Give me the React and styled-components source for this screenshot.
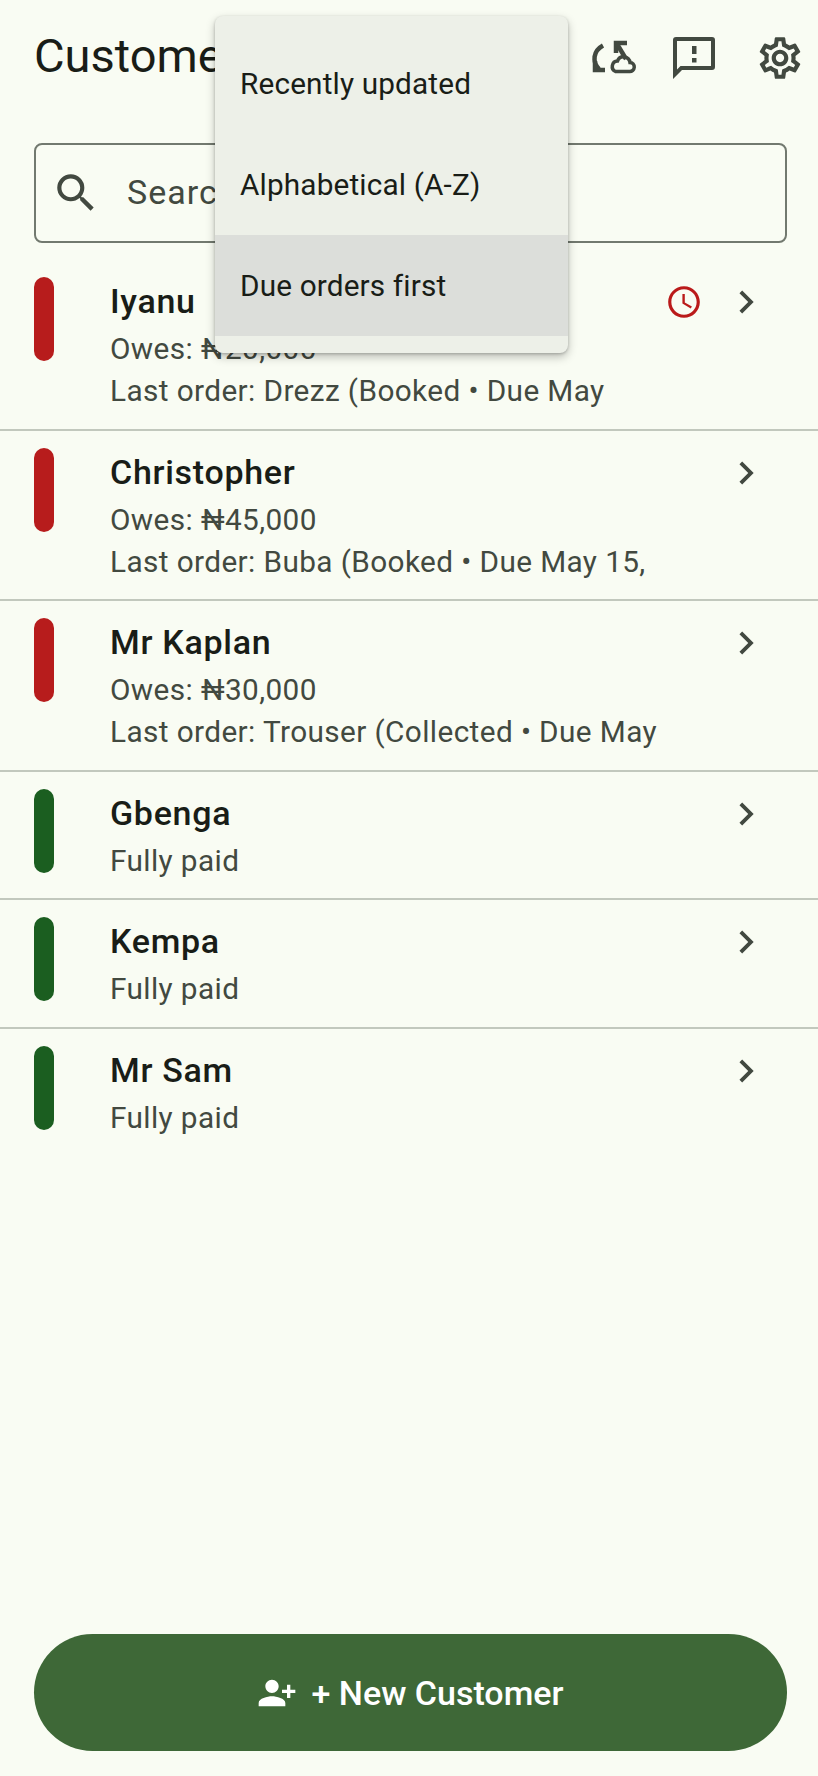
import React from 'react';
import styled, { createGlobalStyle } from 'styled-components';
import {
  MdOutlineSettings,
  MdSearch,
  MdAccessTime,
  MdChevronRight,
  MdPersonAddAlt1,
} from 'react-icons/md';

const customers = [
  { name: 'Iyanu', owes: '₦20,000', last: 'Last order: Drezz (Booked • Due May', late: true },
  { name: 'Christopher', owes: '₦45,000', last: 'Last order: Buba (Booked • Due May 15,' },
  { name: 'Mr Kaplan', owes: '₦30,000', last: 'Last order: Trouser (Collected • Due May' },
  { name: 'Gbenga' },
  { name: 'Kempa' },
  { name: 'Mr Sam' },
];

const sortOptions = ['Recently updated', 'Alphabetical (A-Z)', 'Due orders first'];

function CloudArrowsIcon() {
  return (
    <svg width="60" height="55" viewBox="0 0 60 55" fill="none" stroke="currentColor" strokeWidth="4.5">
      <path d="M20 15.5C10 21 9 32 16 39" />
      <path d="M12 31V40H22" />
      <path d="M33 23V13H44" />
      <path d="M34 14L43 29" />
      <path
        d="M32.5 41.5H46.5a4.5 4.5 0 0 0 .5-9a6.5 6.5 0 0 0-12.5-1.5a5.5 5.5 0 0 0-2 10.5Z"
        strokeWidth="3.5"
      />
    </svg>
  );
}

function FeedbackIcon() {
  return (
    <svg width="60" height="55" viewBox="0 0 60 55" fill="currentColor">
      <path
        fillRule="evenodd"
        d="M12 7H48a3 3 0 0 1 3 3V37a3 3 0 0 1-3 3H18L9 49V10a3 3 0 0 1 3-3ZM13 11V39.5L16.5 36H47V11Z"
      />
      <rect x="28" y="16" width="4.5" height="8" />
      <rect x="28" y="28" width="4.5" height="4.5" />
    </svg>
  );
}

export default function App() {
  return (
    <Page>
      <GlobalStyle />
      <Header>
        <Title>Customers</Title>
        <HeaderIcons>
          <CloudArrowsIcon />
          <FeedbackIcon />
          <GearIcon size={50} />
        </HeaderIcons>
      </Header>
      <SearchBox>
        <MdSearch size={50} />
        <SearchText>Search customers</SearchText>
      </SearchBox>
      <List>
        {customers.map((c) => (
          <Row key={c.name} $tall={!!c.owes}>
            <StatusBar $owing={!!c.owes} />
            <RowBody>
              <Name>{c.name}</Name>
              <Detail>{c.owes ? `Owes: ${c.owes}` : 'Fully paid'}</Detail>
              {c.last && <LastOrder>{c.last}</LastOrder>}
            </RowBody>
            <RowIcons>
              {c.late && <MdAccessTime size={38} color="#ba1a1a" />}
              <MdChevronRight size={46} color="#424940" />
            </RowIcons>
          </Row>
        ))}
      </List>
      <Footer>
        <NewButton>
          <MdPersonAddAlt1 size={40} />
          <span>+ New Customer</span>
        </NewButton>
      </Footer>
      <SortMenu>
        {sortOptions.map((o, i) => (
          <SortItem key={o} $active={i === 2}>{o}</SortItem>
        ))}
      </SortMenu>
    </Page>
  );
}

const GlobalStyle = createGlobalStyle`
  html, body { margin: 0; padding: 0; }
  body { font-family: Roboto, "Noto Sans", sans-serif; background: #f9fcf3; }
`;

const Page = styled.div`
  position: relative;
  width: 818px;
  height: 1776px;
  overflow: hidden;
  display: flex;
  flex-direction: column;
  background: #f9fcf3;
`;

const Header = styled.header`
  height: 143px;
  padding: 0 13px 28px 34px;
  box-sizing: border-box;
  display: flex;
  align-items: center;
  justify-content: space-between;
`;

const Title = styled.h1`
  margin: 0 0 4px;
  font-size: 47px;
  font-weight: 400;
  color: #191d17;
`;

const HeaderIcons = styled.div`
  display: flex;
  align-items: center;
  gap: 21px;
  color: #424940;
`;

const GearIcon = styled(MdOutlineSettings)`
  margin-left: 10px;
`;

const SearchBox = styled.div`
  height: 100px;
  margin: 0 31px 0 34px;
  box-sizing: border-box;
  border: 2px solid #72796f;
  border-radius: 8px;
  padding: 0 20px 0 15px;
  display: flex;
  align-items: center;
  gap: 26px;
  color: #424940;
`;

const SearchText = styled.span`
  margin-bottom: 2px;
  font-size: 34px;
  letter-spacing: 1px;
`;

const List = styled.div`
  flex: 1;
  margin-top: 17px;
`;

const Row = styled.div`
  height: ${(p) => (p.$tall ? '170.5px' : '128.5px')};
  box-sizing: border-box;
  padding: 17px 49px 0 34px;
  display: flex;
  align-items: flex-start;
  border-bottom: 2px solid #c2c8bd;
  &:last-child { border-bottom: none; }
`;

const StatusBar = styled.div`
  width: 20px;
  height: 84px;
  border-radius: 10px;
  background: ${(p) => (p.$owing ? '#b71c1c' : '#1b5e20')};
`;

const RowBody = styled.div`
  flex: 1;
  margin-left: 56px;
  padding-top: 5px;
  display: flex;
  flex-direction: column;
`;

const Name = styled.div`
  font-size: 34px;
  line-height: 38px;
  font-weight: 500;
  letter-spacing: 0.7px;
  color: #191d17;
`;

const Detail = styled.div`
  margin-top: 9px;
  font-size: 29.75px;
  line-height: 40px;
  letter-spacing: 0.4px;
  color: #424940;
`;

const LastOrder = styled(Detail)`
  margin-top: 2px;
`;

const RowIcons = styled.div`
  display: flex;
  align-items: center;
  gap: 20px;
  margin-top: 2px;
`;

const Footer = styled.div`
  padding: 0 31px 25px 34px;
`;

const NewButton = styled.button`
  width: 100%;
  height: 117px;
  border: none;
  border-radius: 59px;
  background: #3e6837;
  color: #fff;
  display: flex;
  align-items: center;
  justify-content: center;
  gap: 14px;
  font-family: inherit;
  font-size: 34px;
  font-weight: 500;
`;

const SortMenu = styled.div`
  position: absolute;
  left: 215px;
  top: 16px;
  width: 353px;
  padding: 17px 0;
  background: #edf0e8;
  border-radius: 8px;
  box-shadow: 0 4px 10px rgba(0, 0, 0, 0.25), 0 1px 3px rgba(0, 0, 0, 0.2);
`;

const SortItem = styled.div`
  height: 101px;
  padding: 0 25px;
  display: flex;
  align-items: center;
  font-size: 29.75px;
  letter-spacing: 0.15px;
  color: #191d17;
  background: ${(p) => (p.$active ? '#dcdeda' : 'transparent')};
`;
